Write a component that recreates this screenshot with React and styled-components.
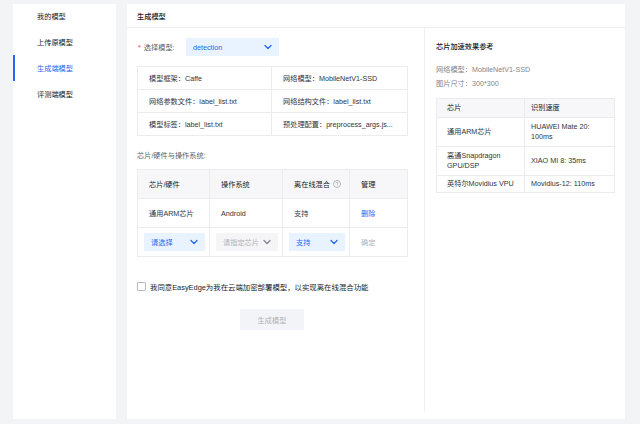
import styled, { createGlobalStyle } from 'styled-components';

const GlobalStyle = createGlobalStyle`
  html, body {
    margin: 0;
    padding: 0;
    background: #f3f4f6;
  }
  body {
    font-family: "Liberation Sans", "Noto Sans CJK SC", sans-serif;
    font-size: 7.2px;
    color: #303540;
  }
`;

const Page = styled.div`
  display: flex;
  gap: 11px;
  height: 424px;
  box-sizing: border-box;
  padding: 4px 15px 5px 13px;
`;

const Sidebar = styled.nav`
  width: 104px;
  background: #fff;
  display: flex;
  flex-direction: column;
`;

const MenuItem = styled.div`
  height: 26px;
  display: flex;
  align-items: center;
  padding-left: 22px;
  color: ${p => (p.$active ? '#2468f2' : '#151b26')};
  border-left: 2px solid ${p => (p.$active ? '#2468f2' : 'transparent')};
  &:first-child {
    margin-top: -1px;
  }
`;

const Main = styled.section`
  flex: 1;
  background: #fff;
  display: flex;
  flex-direction: column;
`;

const MainHeader = styled.div`
  height: 23px;
  display: flex;
  align-items: center;
  padding-left: 10px;
  border-bottom: 1px solid #eeeff2;
  color: #151b26;
  font-weight: 500;
`;

const MainBody = styled.div`
  flex: 1;
  display: flex;
  padding-bottom: 7px;
`;

const LeftCol = styled.div`
  width: 270px;
  padding: 10px 17px 0 10px;
  display: flex;
  flex-direction: column;
`;

const RightCol = styled.div`
  flex: 1;
  border-left: 1px solid #eeeff2;
  padding: 14px 10px 0 11px;
`;

const FieldRow = styled.div`
  display: flex;
  align-items: center;
`;

const FieldLabel = styled.div`
  width: 49px;
  color: #5c5f66;
  display: flex;
  align-items: center;
`;

const Star = styled.span`
  color: #f33e3e;
  margin: 0 3px 0 1px;
`;

const Select = styled.div`
  width: ${p => p.$w}px;
  height: 18px;
  box-sizing: border-box;
  padding: 0 7px;
  display: flex;
  align-items: center;
  justify-content: space-between;
  background: ${p => (p.$tone === 'grey' ? '#f5f5f7' : '#e8f3ff')};
  color: ${p => (p.$tone === 'grey' ? '#b0b3b8' : '#2468f2')};
`;

const Chevron = ({ color }) => (
  <svg width="8" height="6" viewBox="0 0 8 6">
    <path d="M1 1.5 L4 4.5 L7 1.5" fill="none" stroke={color} strokeWidth="1.3" strokeLinecap="round" strokeLinejoin="round" />
  </svg>
);

const InfoTable = styled.table`
  margin-top: 10px;
  border-collapse: collapse;
  width: 270px;
  table-layout: fixed;

  td {
    height: 22px;
    padding: 0 0 0 11px;
    border: 1px solid #ebecf0;
    white-space: nowrap;
    overflow: hidden;
  }
`;

const SectionLabel = styled.div`
  margin-top: 15px;
  line-height: 10px;
  color: #5c5f66;
`;

const ChipTable = styled.table`
  margin-top: 8px;
  border-collapse: collapse;
  width: 270px;
  table-layout: fixed;

  th, td {
    height: 28px;
    padding: 0 0 0 11px;
    border: 1px solid #ebecf0;
    text-align: left;
    font-weight: 400;
    white-space: nowrap;
  }
  th {
    background: #f7f7f9;
    color: #151b26;
  }
  td.sel {
    padding-left: 6px;
  }
`;

const HeadWithHelp = styled.span`
  display: inline-flex;
  align-items: center;
  gap: 3px;
`;

const HelpIcon = () => (
  <svg width="8" height="8" viewBox="0 0 8 8">
    <circle cx="4" cy="4" r="3.5" fill="none" stroke="#9a9da3" strokeWidth="0.7" />
    <path d="M3 3.1 a1 1 0 1 1 1.4 0.9 c-0.3 0.15 -0.4 0.35 -0.4 0.7" fill="none" stroke="#9a9da3" strokeWidth="0.7" />
    <circle cx="4" cy="5.9" r="0.4" fill="#9a9da3" />
  </svg>
);

const LinkText = styled.span`
  color: #2468f2;
`;

const MutedText = styled.span`
  color: #b0b3b8;
`;

const Agree = styled.label`
  margin-top: 24px;
  display: flex;
  align-items: center;
  gap: 4px;
  height: 10px;
  color: #151b26;
  font-size: 7.4px;
`;

const CheckBox = styled.span`
  width: 9px;
  height: 9px;
  box-sizing: border-box;
  border: 1px solid #b8babf;
  border-radius: 1px;
`;

const ButtonRow = styled.div`
  margin-top: 18px;
  display: flex;
  justify-content: center;
`;

const GenButton = styled.button`
  width: 64px;
  height: 21px;
  border: none;
  background: #f3f4f7;
  color: #b0b3b8;
  font: inherit;
  padding: 0;
`;

const RightTitle = styled.div`
  line-height: 10px;
  color: #151b26;
  font-weight: 500;
`;

const Meta = styled.div`
  margin-top: 11px;
  color: #84868c;
  line-height: 14px;
`;

const SpeedTable = styled.table`
  margin-top: 7px;
  border-collapse: collapse;
  width: 178px;
  table-layout: fixed;

  th, td {
    padding: 4px 4px 4px 10px;
    line-height: 10px;
    border: 1px solid #ebecf0;
    text-align: left;
    font-weight: 400;
    vertical-align: middle;
  }
  th {
    background: #f7f7f9;
    color: #151b26;
  }
  tr:last-child td {
    padding-top: 3px;
    padding-bottom: 3px;
  }
  th:nth-child(2), td:nth-child(2) {
    padding-left: 6px;
  }
`;

const menu = ['我的模型', '上传原模型', '生成端模型', '评测端模型'];

export default function App() {
  return (
    <>
      <GlobalStyle />
      <Page>
        <Sidebar>
          {menu.map(m => (
            <MenuItem key={m} $active={m === '生成端模型'}>
              {m}
            </MenuItem>
          ))}
        </Sidebar>
        <Main>
          <MainHeader>生成模型</MainHeader>
          <MainBody>
            <LeftCol>
              <FieldRow>
                <FieldLabel>
                  <Star>*</Star>选择模型:
                </FieldLabel>
                <Select $w={93}>
                  detection <Chevron color="#2468f2" />
                </Select>
              </FieldRow>
              <InfoTable>
                <colgroup>
                  <col style={{ width: 134 }} />
                  <col style={{ width: 136 }} />
                </colgroup>
                <tbody>
                  <tr>
                    <td>模型框架：Caffe</td>
                    <td>网络模型：MobileNetV1-SSD</td>
                  </tr>
                  <tr>
                    <td>网络参数文件：label_list.txt</td>
                    <td>网络结构文件：label_list.txt</td>
                  </tr>
                  <tr>
                    <td>模型标签：label_list.txt</td>
                    <td>预处理配置：preprocess_args.js...</td>
                  </tr>
                </tbody>
              </InfoTable>
              <SectionLabel>芯片/硬件与操作系统:</SectionLabel>
              <ChipTable>
                <colgroup>
                  <col style={{ width: 72 }} />
                  <col style={{ width: 73 }} />
                  <col style={{ width: 67 }} />
                  <col style={{ width: 58 }} />
                </colgroup>
                <thead>
                  <tr>
                    <th>芯片/硬件</th>
                    <th>操作系统</th>
                    <th>
                      <HeadWithHelp>
                        离在线混合 <HelpIcon />
                      </HeadWithHelp>
                    </th>
                    <th>管理</th>
                  </tr>
                </thead>
                <tbody>
                  <tr>
                    <td>通用ARM芯片</td>
                    <td>Android</td>
                    <td>支持</td>
                    <td>
                      <LinkText>删除</LinkText>
                    </td>
                  </tr>
                  <tr>
                    <td className="sel">
                      <Select $w={61}>
                        请选择 <Chevron color="#2468f2" />
                      </Select>
                    </td>
                    <td className="sel">
                      <Select $w={62} $tone="grey">
                        请指定芯片 <Chevron color="#84868c" />
                      </Select>
                    </td>
                    <td className="sel">
                      <Select $w={56}>
                        支持 <Chevron color="#2468f2" />
                      </Select>
                    </td>
                    <td>
                      <MutedText>确定</MutedText>
                    </td>
                  </tr>
                </tbody>
              </ChipTable>
              <Agree>
                <CheckBox />
                我同意EasyEdge为我在云端加密部署模型，以实现离在线混合功能
              </Agree>
              <ButtonRow>
                <GenButton>生成模型</GenButton>
              </ButtonRow>
            </LeftCol>
            <RightCol>
              <RightTitle>芯片加速效果参考</RightTitle>
              <Meta>
                <div>网络模型：MobileNetV1-SSD</div>
                <div>图片尺寸：300*300</div>
              </Meta>
              <SpeedTable>
                <colgroup>
                  <col style={{ width: 88 }} />
                  <col style={{ width: 90 }} />
                </colgroup>
                <thead>
                  <tr>
                    <th>芯片</th>
                    <th>识别速度</th>
                  </tr>
                </thead>
                <tbody>
                  <tr>
                    <td>通用ARM芯片</td>
                    <td>
                      HUAWEI Mate 20:
                      <br />
                      100ms
                    </td>
                  </tr>
                  <tr>
                    <td>
                      高通Snapdragon
                      <br />
                      GPU/DSP
                    </td>
                    <td>XIAO MI 8: 35ms</td>
                  </tr>
                  <tr>
                    <td>英特尔Movidius VPU</td>
                    <td>Movidius-12: 110ms</td>
                  </tr>
                </tbody>
              </SpeedTable>
            </RightCol>
          </MainBody>
        </Main>
      </Page>
    </>
  );
}
